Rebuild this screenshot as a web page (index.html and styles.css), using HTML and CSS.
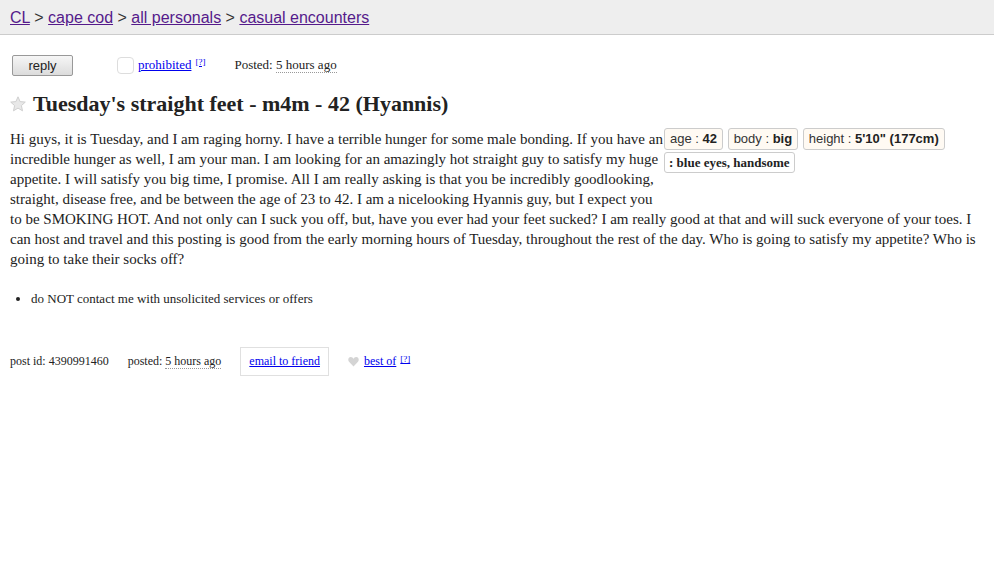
FILE: index.html
```html
<!DOCTYPE html>
<html>
<head>
<meta charset="utf-8">
<title>Tuesday's straight feet - m4m - 42 (Hyannis)</title>
<link rel="stylesheet" href="styles.css">
</head>
<body>
<header class="bchead">
  <a class="crumb" href="#">CL</a> <span class="sep">&gt;</span>
  <a class="crumb" href="#">cape cod</a> <span class="sep">&gt;</span>
  <a class="crumb" href="#">all personals</a> <span class="sep">&gt;</span>
  <a class="crumb" href="#">casual encounters</a>
</header>
<section class="body">
  <div class="dateReplyBar">
    <button class="reply">reply</button>
    <span class="flag"><span class="flagbox"></span><a class="blue" href="#">prohibited</a> <sup class="help"><a class="blue" href="#">[?]</a></sup></span>
    <span class="postinginfo">Posted: <time class="dotted">5 hours ago</time></span>
  </div>
  <h2 class="postingtitle">
    <svg class="star" width="16" height="16" viewBox="0 0 16 16"><path d="M8 0.8 L10.1 5.6 L15.3 6.1 L11.4 9.6 L12.5 14.8 L8 12.1 L3.5 14.8 L4.6 9.6 L0.7 6.1 L5.9 5.6 Z" fill="#e8e8e8" stroke="#cfcfcf" stroke-width="1"/></svg>
    Tuesday's straight feet - m4m - 42 (Hyannis)
  </h2>
  <div class="userbody">
    <div class="mapAndAttrs">
      <p class="attrgroup">
        <span class="attr">age : <b>42</b></span>
        <span class="attr">body : <b>big</b></span>
        <span class="attr">height : <b>5'10" (177cm)</b></span>
        <span class="attr attr-serif"><b>: blue eyes, handsome</b></span>
      </p>
    </div>
    <section class="postingbody">Hi guys, it is Tuesday, and I am raging horny. I have a terrible hunger for some male bonding. If you have an incredible hunger as well, I am your man. I am looking for an amazingly hot straight guy to satisfy my huge appetite. I will satisfy you big time, I promise. All I am really asking is that you be incredibly goodlooking, straight, disease free, and be between the age of 23 to 42. I am a nicelooking Hyannis guy, but I expect you<br>to be SMOKING HOT. And not only can I suck you off, but, have you ever had your feet sucked? I am really good at that and will suck everyone of your toes. I can host and travel and this posting is good from the early morning hours of Tuesday, throughout the rest of the day. Who is going to satisfy my appetite? Who is going to take their socks off?</section>
    <ul class="notices">
      <li>do NOT contact me with unsolicited services or offers</li>
    </ul>
  </div>
  <div class="postinginfos">
    <span class="pinfo">post id: 4390991460</span>
    <span class="pinfo">posted: <time class="dotted">5 hours ago</time></span>
    <span class="pinfo email"><a class="blue" href="#">email to friend</a></span>
    <span class="pinfo bestof">
      <svg class="heart" width="11" height="11" viewBox="0 0 11 11"><path d="M5.5 10.5 L1 5.8 C-0.4 4.3 0.2 1 2.8 1 C4.2 1 5 2 5.5 2.8 C6 2 6.8 1 8.2 1 C10.8 1 11.4 4.3 10 5.8 Z" fill="#d4d4d4"/></svg>
      <a class="blue" href="#">best of</a> <sup class="help"><a class="blue" href="#">[?]</a></sup>
    </span>
  </div>
</section>
</body>
</html>
```
FILE: styles.css
```css
html, body {
  margin: 0;
  padding: 0;
  background: #fff;
  color: #222;
  font-family: "Liberation Serif", "Times New Roman", serif;
}
.bchead {
  background: #eeeeee;
  border-bottom: 1px solid #cccccc;
  height: 35px;
  box-sizing: border-box;
  padding: 8px 10px 0;
  font-family: "Liberation Sans", Arial, sans-serif;
  font-size: 16px;
  line-height: 20px;
  color: #333;
}
.crumb { color: #551a8b; }
.sep { color: #333; }
.body {
  padding: 0 10px;
}
.dateReplyBar {
  display: flex;
  align-items: center;
  margin-top: 19px;
  height: 22px;
  font-size: 13px;
}
.reply {
  width: 61px;
  height: 21px;
  margin-left: 2px;
  padding: 0;
  border: 1px solid #999;
  border-radius: 2px;
  background: linear-gradient(#f6f6f6, #dcdcdc);
  font-family: "Liberation Sans", Arial, sans-serif;
  font-size: 13px;
  color: #222;
}
.flag {
  display: flex;
  align-items: center;
  margin-left: 44px;
}
.flagbox {
  display: inline-block;
  width: 15px;
  height: 15px;
  border: 1px solid #ddd;
  border-radius: 4px;
  margin-right: 4px;
}
.blue { color: #0000ee; }
.help {
  font-size: 9px;
  margin-left: 4px;
  align-self: flex-start;
  line-height: 10px;
}
.postinginfo {
  margin-left: 29px;
  color: #222;
}
.dotted {
  border-bottom: 1px dotted #999;
}
.postingtitle {
  margin: 14px 0 0;
  font-size: 22px;
  line-height: 28px;
  font-weight: bold;
  color: #222;
  display: flex;
  align-items: center;
}
.star {
  margin-right: 7px;
}
.userbody {
  margin-top: 11px;
}
.mapAndAttrs {
  float: right;
  width: 320px;
}
.attrgroup {
  margin: -1px 0 0;
  font-family: "Liberation Sans", Arial, sans-serif;
  font-size: 13px;
  line-height: 20px;
}
.attr {
  display: inline-block;
  border: 1px solid #ccc;
  border-radius: 3px;
  background: #fffaf3;
  padding: 0 5px;
  margin: 0 1px 2px 0;
  color: #333;
  line-height: 20px;
}
.attr b { color: #222; }
.attr-serif {
  font-family: "Liberation Serif", "Times New Roman", serif;
  font-size: 13px;
  background: #fff;
  line-height: 19px;
  padding: 0 4px;
}
.postingbody {
  font-size: 15px;
  line-height: 20px;
  color: #222;
}
.notices {
  clear: both;
  margin: 22px 0 0;
  padding-left: 21px;
  font-size: 13px;
  line-height: 16px;
}
.postinginfos {
  display: flex;
  align-items: center;
  margin-top: 40px;
  font-size: 12px;
}
.pinfo { margin-right: 19px; }
.email {
  border: 1px solid #e0e0e0;
  padding: 6px 8px;
  margin-right: 19px;
}
.bestof {
  display: flex;
  align-items: center;
}
.heart { margin-right: 5px; }
```
